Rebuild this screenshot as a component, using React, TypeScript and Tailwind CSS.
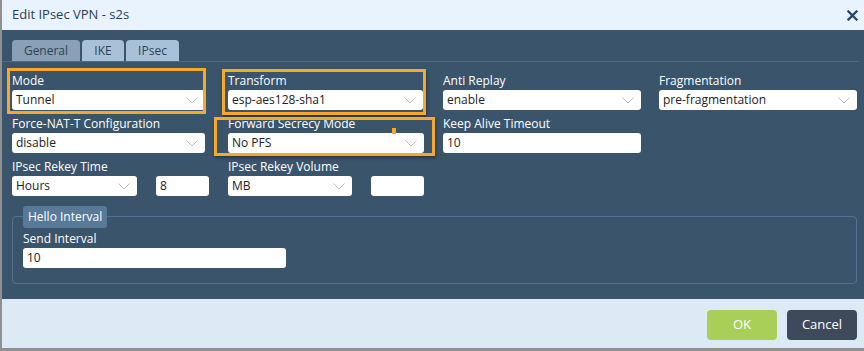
import type { ReactNode } from "react";

const font = { fontFamily: '"Open Sans", "Liberation Sans", sans-serif' };

function Chevron() {
  return (
    <svg width="12" height="7" viewBox="0 0 12 7" className="shrink-0">
      <polyline points="0.5,0.5 6,6 11.5,0.5" fill="none" stroke="#bcc1c6" strokeWidth="1" />
    </svg>
  );
}

function Select({ value, w }: { value: string; w: string }) {
  return (
    <div className={`${w} flex h-[20px] items-center justify-between rounded-[3px] bg-white pl-[4px] pr-[7px] text-[12px] text-[#222]`}>
      <span className="leading-none">{value}</span>
      <Chevron />
    </div>
  );
}

function Input({ value, w }: { value?: string; w: string }) {
  return (
    <div className={`${w} flex h-[20px] items-center rounded-[3px] bg-white pl-[4px] text-[12px] leading-none text-[#222]`}>
      {value}
    </div>
  );
}

function Field({ label, children }: { label: string; children: ReactNode }) {
  return (
    <div className="flex flex-col">
      <div className="h-[17px] text-[12px] leading-[16px] text-white">{label}</div>
      {children}
    </div>
  );
}

export default function App() {
  return (
    <div
      className="h-[351px] w-[864px] border-b-[3px] border-l-[2px] border-[#909090] bg-[#909090]"
      style={font}
    >
      <div className="flex h-full flex-col">
        {/* header */}
        <div className="flex h-[30px] items-center justify-between bg-[#e9f3fd] pl-[10px] pr-[6px]">
          <span className="text-[13px] text-[#2b3f52]">Edit IPsec VPN - s2s</span>
          <svg width="11" height="11" viewBox="0 0 11 11">
            <path d="M1.5 1.5 L9.5 9.5 M9.5 1.5 L1.5 9.5" stroke="#2c4a66" strokeWidth="2.4" strokeLinecap="square" />
          </svg>
        </div>

        {/* body */}
        <div className="relative h-[269px] bg-[#3a546c]">
          <div className="flex h-[31px] items-end gap-[2px] pl-[10px]">
            <div className="flex h-[21px] w-[68px] items-center justify-center rounded-t-[4px] bg-[#8aa0b6] text-[12px] text-[#2d4257]">
              General
            </div>
            <div className="flex h-[21px] w-[42px] items-center justify-center rounded-t-[4px] bg-[#a9c1d8] text-[12px] text-[#2d4257]">
              IKE
            </div>
            <div className="flex h-[21px] w-[53px] items-center justify-center rounded-t-[4px] bg-[#a9c1d8] text-[12px] text-[#2d4257]">
              IPsec
            </div>
          </div>
          <div className="mr-[5px] h-px bg-[#4f6a83]" />

          <div className="flex flex-col gap-[6px] pl-[10px] pt-[11px]">
            <div className="grid grid-cols-[216px_215px_216px_1fr]">
              <Field label="Mode">
                <Select value="Tunnel" w="w-[193px]" />
              </Field>
              <Field label="Transform">
                <Select value="esp-aes128-sha1" w="w-[195px]" />
              </Field>
              <Field label="Anti Replay">
                <Select value="enable" w="w-[198px]" />
              </Field>
              <Field label="Fragmentation">
                <Select value="pre-fragmentation" w="w-[198px]" />
              </Field>
            </div>

            <div className="grid grid-cols-[216px_215px_216px_1fr]">
              <Field label="Force-NAT-T Configuration">
                <Select value="disable" w="w-[193px]" />
              </Field>
              <Field label="Forward Secrecy Mode">
                <Select value="No PFS" w="w-[196px]" />
              </Field>
              <Field label="Keep Alive Timeout">
                <Input value="10" w="w-[198px]" />
              </Field>
              <div />
            </div>

            <div className="grid grid-cols-[216px_215px_216px_1fr]">
              <Field label="IPsec Rekey Time">
                <div className="flex gap-[19px]">
                  <Select value="Hours" w="w-[125px]" />
                  <Input value="8" w="w-[53px]" />
                </div>
              </Field>
              <Field label="IPsec Rekey Volume">
                <div className="flex gap-[19px]">
                  <Select value="MB" w="w-[124px]" />
                  <Input w="w-[53px]" />
                </div>
              </Field>
              <div />
              <div />
            </div>
          </div>

          {/* Hello Interval group */}
          <div className="relative ml-[10px] mt-[20px] w-[845px] rounded-[4px] border border-[#557290] pb-[15px] pl-[10px] pt-[14px]">
            <div className="absolute left-[10px] top-[-11px] flex h-[22px] items-center rounded-[3px] bg-[#587a98] px-[5px] text-[12px] text-white">
              Hello Interval
            </div>
            <Field label="Send Interval">
              <Input value="10" w="w-[263px]" />
            </Field>
          </div>

          {/* highlight annotations */}
          <div className="pointer-events-none absolute left-[5px] top-[38px] h-[46px] w-[199px] border-[3px] border-[#f5a92b]" />
          <div className="pointer-events-none absolute left-[220px] top-[39px] h-[46px] w-[204px] border-[3px] border-[#f5a92b] shadow-[1px_2px_3px_rgba(0,0,0,0.35)]" />
          <div className="pointer-events-none absolute left-[212px] top-[87px] h-[39px] w-[221px] border-[3px] border-[#f5a92b] shadow-[1px_2px_3px_rgba(0,0,0,0.35)]" />
          <div className="pointer-events-none absolute left-[390px] top-[98px] h-[6px] w-[4px] bg-[#f5a92b]" />
        </div>

        {/* footer */}
        <div className="flex flex-1 items-start justify-end gap-[10px] bg-[#dde9f5] pr-[7px] pt-[11px]">
          <button className="flex h-[30px] w-[70px] items-center justify-center rounded-[4px] bg-[#a9cf58] text-[13px] text-white">
            OK
          </button>
          <button className="flex h-[30px] w-[70px] items-center justify-center rounded-[4px] bg-[#3e4a5b] text-[13px] text-white">
            Cancel
          </button>
        </div>
      </div>
    </div>
  );
}
